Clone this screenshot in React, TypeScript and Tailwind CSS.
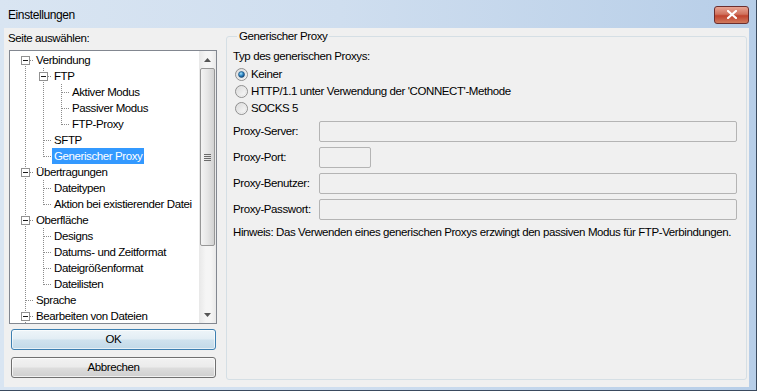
import React from "react";

type Col = "I" | "T" | "L" | "F" | "";

type Row = { label: string; cols: Col[]; exp?: boolean; sel?: boolean };

const rows: Row[] = [
  { label: "Verbindung", cols: ["F"], exp: true },
  { label: "FTP", cols: ["I", "T"], exp: true },
  { label: "Aktiver Modus", cols: ["I", "I", "T"] },
  { label: "Passiver Modus", cols: ["I", "I", "T"] },
  { label: "FTP-Proxy", cols: ["I", "I", "L"] },
  { label: "SFTP", cols: ["I", "T"] },
  { label: "Generischer Proxy", cols: ["I", "L"], sel: true },
  { label: "Übertragungen", cols: ["T"], exp: true },
  { label: "Dateitypen", cols: ["I", "T"] },
  { label: "Aktion bei existierender Datei", cols: ["I", "L"] },
  { label: "Oberfläche", cols: ["T"], exp: true },
  { label: "Designs", cols: ["I", "T"] },
  { label: "Datums- und Zeitformat", cols: ["I", "T"] },
  { label: "Dateigrößenformat", cols: ["I", "T"] },
  { label: "Dateilisten", cols: ["I", "L"] },
  { label: "Sprache", cols: ["T"] },
  { label: "Bearbeiten von Dateien", cols: ["T"], exp: true },
];

function TreeCell({ kind, exp }: { kind: Col; exp?: boolean }) {
  const dot = { stroke: "#8c8c8c", strokeWidth: 1, strokeDasharray: "1 1" };
  return (
    <svg width="18" height="16" className="block shrink-0">
      {(kind === "I" || kind === "T") && <line x1="9.5" y1="0" x2="9.5" y2="16" {...dot} />}
      {kind === "L" && <line x1="9.5" y1="0" x2="9.5" y2="9" {...dot} />}
      {kind === "F" && <line x1="9.5" y1="8" x2="9.5" y2="16" {...dot} />}
      {kind !== "I" && kind !== "" && <line x1="10" y1="8.5" x2="18" y2="8.5" {...dot} />}
      {exp && (
        <>
          <rect x="5.5" y="4.5" width="8" height="8" fill="#ffffff" stroke="#919191" />
          <line x1="7" y1="8.5" x2="12" y2="8.5" stroke="#1c1c1c" />
        </>
      )}
    </svg>
  );
}

function Radio({ checked }: { checked?: boolean }) {
  return (
    <svg width="13" height="13" className="block shrink-0">
      <defs>
        <linearGradient id="rfill" x1="0" y1="0" x2="1" y2="1">
          <stop offset="0" stopColor="#d6d6d6" />
          <stop offset="1" stopColor="#ffffff" />
        </linearGradient>
        <radialGradient id="rdot" cx="0.4" cy="0.35" r="0.7">
          <stop offset="0" stopColor="#a7e3f9" />
          <stop offset="0.5" stopColor="#2f86c4" />
          <stop offset="1" stopColor="#0d3a6a" />
        </radialGradient>
      </defs>
      <circle cx="6.5" cy="6.5" r="6" fill="url(#rfill)" stroke="#8f8f8f" />
      <circle cx="6.5" cy="6.5" r="4.5" fill="none" stroke="#e6e6e6" />
      {checked && <circle cx="6.5" cy="6.5" r="3" fill="url(#rdot)" stroke="#1a4f7a" strokeWidth="0.6" />}
    </svg>
  );
}

function Field({ label, small }: { label: string; small?: boolean }) {
  return (
    <div className="flex items-center h-[21px]">
      <span className="w-[86px] shrink-0">{label}</span>
      <div
        className={
          small
            ? "w-[52px] h-[21px] border border-[#b4b4b4] rounded-[2px] bg-[#f0f0f0]"
            : "w-[418px] h-[21px] border border-[#b4b4b4] rounded-[2px] bg-[#f0f0f0]"
        }
      />
    </div>
  );
}

function ScrollBar() {
  return (
    <div className="w-[17px] shrink-0 flex flex-col bg-[linear-gradient(90deg,#e8e8e8,#f5f5f5_40%,#f5f5f5_70%,#e9e9e9)]">
      <div className="h-[17px] flex items-center justify-center">
        <svg width="7" height="4">
          <path d="M0 4 L3.5 0 L7 4 Z" fill="#555555" />
        </svg>
      </div>
      <div className="h-[178px] mx-[1px] border border-[#979797] rounded-[2px] bg-[linear-gradient(90deg,#f4f4f4,#e6e6e6_50%,#d2d2d2)] flex items-end justify-center pb-[84px]">
        <div className="flex flex-col gap-[1px]">
          <div className="w-[7px] h-[1px] bg-[#6b6b6b]" />
          <div className="w-[7px] h-[1px] bg-[#6b6b6b]" />
          <div className="w-[7px] h-[1px] bg-[#6b6b6b]" />
          <div className="w-[7px] h-[1px] bg-[#6b6b6b]" />
        </div>
      </div>
      <div className="flex-1" />
      <div className="h-[17px] flex items-center justify-center">
        <svg width="7" height="4">
          <path d="M0 0 L3.5 4 L7 0 Z" fill="#555555" />
        </svg>
      </div>
    </div>
  );
}

export default function App() {
  return (
    <div className="w-[757px] h-[391px] flex flex-col overflow-hidden font-['Liberation_Sans',Arial,sans-serif] text-[11.5px] tracking-[-0.4px] text-black bg-[linear-gradient(90deg,#d9e5f2_0%,#cfdeef_45%,#b7cee8_100%)] border-r border-b border-[#3a4a5e]">
      {/* title bar */}
      <div className="h-[28px] shrink-0 flex items-center pl-[8px] pr-[7px]">
        <span className="flex-1 pt-[1px] text-[12px]">Einstellungen</span>
        <div className="w-[35px] h-[18px] mt-[1px] rounded-[3px] border border-[#6b2e2e] bg-[linear-gradient(180deg,#e8a493_0%,#d0725e_45%,#c0432e_55%,#d07a5e_100%)] flex items-center justify-center">
          <svg width="10" height="9">
            <path d="M1 1 L9 8 M9 1 L1 8" stroke="#ffffff" strokeWidth="2.2" strokeLinecap="square" />
          </svg>
        </div>
      </div>

      {/* client */}
      <div className="flex-1 ml-[4px] mr-[7px] mb-[3px] bg-[#f0f0f0] flex">
        {/* left column */}
        <div className="ml-[5px] w-[208px] flex flex-col pt-[3px]">
          <div className="h-[16px] flex items-center -ml-[1px]">Seite auswählen:</div>
          <div className="mt-[3px] h-[274px] border border-[#828790] bg-white flex">
            <div className="flex-1 pl-[6px] pt-[1px] overflow-hidden">
              {rows.map((r) => (
                <div key={r.label} className="h-[16px] flex items-center whitespace-nowrap">
                  {r.cols.map((c, i) => (
                    <TreeCell key={i} kind={c} exp={r.exp && i === r.cols.length - 1} />
                  ))}
                  <span
                    className={
                      r.sel
                        ? "h-[16px] leading-[16px] px-[2px] bg-[#3399ff] text-white"
                        : "h-[16px] leading-[16px] px-[2px]"
                    }
                  >
                    {r.label}
                  </span>
                </div>
              ))}
            </div>
            <ScrollBar />
          </div>
          <div className="mt-[5px] ml-[2px] mr-[1px] h-[21px] rounded-[3px] border border-[#3c7fb1] bg-[linear-gradient(180deg,#eef5f9_0%,#e2edf4_48%,#cfe2ee_52%,#c2d9e8_100%)] shadow-[inset_0_0_0_1px_rgba(255,255,255,0.6)] flex items-center justify-center">
            OK
          </div>
          <div className="mt-[7px] ml-[2px] mr-[1px] h-[21px] rounded-[3px] border border-[#707070] bg-[linear-gradient(180deg,#f2f2f2_0%,#ebebeb_48%,#dddddd_52%,#cfcfcf_100%)] shadow-[inset_0_0_0_1px_rgba(255,255,255,0.7)] flex items-center justify-center">
            Abbrechen
          </div>
        </div>

        {/* right group */}
        <fieldset className="ml-[9px] w-[521px] h-[352px] border border-[#d5dfe5] rounded-[3px] pl-[6px]">
          <legend className="ml-[4px] px-[2px] h-[16px] leading-[16px]">Generischer Proxy</legend>
          <div className="pt-[4px] h-[20px] leading-[16px]">Typ des generischen Proxys:</div>
          <div className="mt-[2px] flex flex-col">
            <div className="h-[17px] flex items-center gap-[3px] pl-[2px]">
              <Radio checked />
              <span>Keiner</span>
            </div>
            <div className="h-[17px] flex items-center gap-[3px] pl-[2px]">
              <Radio />
              <span>HTTP/1.1 unter Verwendung der 'CONNECT'-Methode</span>
            </div>
            <div className="h-[17px] flex items-center gap-[3px] pl-[2px]">
              <Radio />
              <span>SOCKS 5</span>
            </div>
          </div>
          <div className="mt-[4px] flex flex-col gap-[5px]">
            <Field label="Proxy-Server:" />
            <Field label="Proxy-Port:" small />
            <Field label="Proxy-Benutzer:" />
            <Field label="Proxy-Passwort:" />
          </div>
          <div className="mt-[4px] h-[16px] leading-[16px] whitespace-nowrap">
            Hinweis: Das Verwenden eines generischen Proxys erzwingt den passiven Modus für FTP-Verbindungen.
          </div>
        </fieldset>
      </div>
    </div>
  );
}
